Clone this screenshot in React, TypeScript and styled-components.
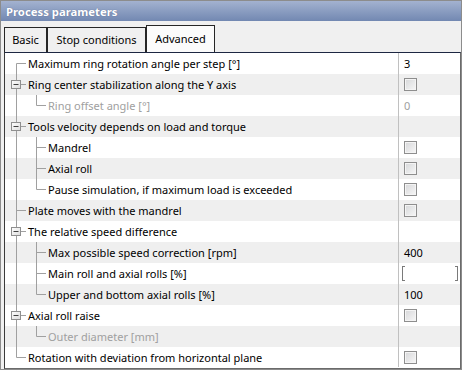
import styled, { createGlobalStyle } from "styled-components";

const GlobalStyle = createGlobalStyle`
  html, body {
    margin: 0;
    padding: 0;
    background: #f0f0f0;
  }
  body {
    font-family: "Noto Sans", "Liberation Sans", sans-serif;
    font-size: 11px;
  }
`;

const Window = styled.div`
  width: 462px;
  height: 370px;
  box-sizing: border-box;
  border: 1px solid #8c8c8c;
  background: #f0f0f0;
  display: flex;
  flex-direction: column;
`;

const TitleBar = styled.div`
  height: 20px;
  flex: none;
  display: flex;
  align-items: center;
  padding-left: 5px;
  background: linear-gradient(#a3b2d0, #7288b2);
  color: #fff;
  font-weight: bold;
  font-size: 11.3px;
  text-shadow: 0 0 1px rgba(40, 50, 90, 0.5);
`;

const TabStrip = styled.div`
  height: 31px;
  flex: none;
  display: flex;
  align-items: flex-end;
  padding-left: 3px;
`;

const Tab = styled.div<{ $active?: boolean; $w: number }>`
  box-sizing: border-box;
  width: ${({ $w }) => $w}px;
  height: ${({ $active }) => ($active ? "27px" : "25px")};
  padding-bottom: 1px;
  display: flex;
  align-items: center;
  justify-content: center;
  border: 1px solid #262626;
  border-bottom: none;
  background: ${({ $active }) => ($active ? "#fbfbfb" : "#f0f0f0")};
  color: #000;
  font-size: 11px;
  white-space: nowrap;
`;

const Panel = styled.div`
  flex: 1;
  margin-left: 3px;
  border: 1px solid #1d2742;
  border-left-color: #3a3a3a;
  border-right-color: #6b6b6b;
  border-bottom-color: #6b6b6b;
  background: #fff;
  display: flex;
  flex-direction: column;
`;

const Row = styled.div<{ $shade: boolean }>`
  height: 21px;
  flex: none;
  display: flex;
  background: ${({ $shade }) => ($shade ? "#efefef" : "#fff")};
`;

const NameCell = styled.div`
  width: 393px;
  flex: none;
  display: flex;
  align-items: center;
  padding-left: 1px;
  box-sizing: border-box;
  overflow: hidden;
`;

const Label = styled.span<{ $disabled?: boolean }>`
  margin-left: 2px;
  white-space: nowrap;
  color: ${({ $disabled }) => ($disabled ? "#a0a0a0" : "#000")};
`;

const ValueCell = styled.div<{ $last?: boolean }>`
  flex: 1;
  display: flex;
  align-items: center;
  padding: 0 2px 0 5px;
  border-left: 1px solid #c0c0c0;
  ${({ $last }) => ($last ? "border-image: linear-gradient(#c0c0c0 90%, transparent 90%) 1;" : "")}
`;

const ValueText = styled.span<{ $disabled?: boolean }>`
  color: ${({ $disabled }) => ($disabled ? "#a0a0a0" : "#000")};
`;

const Check = styled.span`
  width: 13px;
  height: 13px;
  box-sizing: border-box;
  border: 1px solid #8e8e8e;
  box-shadow: inset 0 0 0 1px #f4f4f4;
  background: linear-gradient(135deg, #d6d7d9, #f7f7f7);
`;

const Edit = styled.span`
  flex: 1;
  height: 15px;
  display: flex;
  justify-content: space-between;
  margin-left: -2px;
`;

const Bracket = styled.span<{ $side: "left" | "right" }>`
  width: 3px;
  box-sizing: border-box;
  border: 1px solid #7a7a7a;
  ${({ $side }) => ($side === "left" ? "border-right: none;" : "border-left: none;")}
`;

type Vert = "full" | "top" | "bottom";

const Guide = ({ vert, branch, expander }: { vert?: Vert; branch?: boolean; expander?: boolean }) => {
  const y0 = vert === "bottom" ? 10.5 : 0;
  const y1 = vert === "top" ? 10.5 : 21;
  return (
    <svg width="20" height="21" viewBox="0 0 20 21" style={{ flex: "none" }}>
      <defs>
        <linearGradient id="expfill" x1="0" y1="0" x2="1" y2="1">
          <stop offset="0" stopColor="#ffffff" />
          <stop offset="1" stopColor="#dcdcdc" />
        </linearGradient>
      </defs>
      {vert && <line x1="10.5" y1={y0} x2="10.5" y2={y1} stroke="#a0a0a0" />}
      {branch && <line x1="10.5" y1="10.5" x2="20" y2="10.5" stroke="#a0a0a0" />}
      {expander && (
        <>
          <rect x="5.5" y="6.5" width="9" height="8" fill="url(#expfill)" stroke="#8f8f8f" />
          <line x1="7.5" y1="10.5" x2="12.5" y2="10.5" stroke="#404040" />
        </>
      )}
    </svg>
  );
};

type Value =
  | { kind: "text"; text: string; disabled?: boolean }
  | { kind: "check" }
  | { kind: "edit" }
  | { kind: "none" };

interface Item {
  label: string;
  level: 0 | 1;
  value: Value;
  expander?: boolean;
  disabled?: boolean;
  lastChild?: boolean;
}

const items: Item[] = [
  { label: "Maximum ring rotation angle per step [°]", level: 0, value: { kind: "text", text: "3" } },
  { label: "Ring center stabilization along the Y axis", level: 0, expander: true, value: { kind: "check" } },
  { label: "Ring offset angle [°]", level: 1, disabled: true, lastChild: true, value: { kind: "text", text: "0", disabled: true } },
  { label: "Tools velocity depends on load and torque", level: 0, expander: true, value: { kind: "none" } },
  { label: "Mandrel", level: 1, value: { kind: "check" } },
  { label: "Axial roll", level: 1, value: { kind: "check" } },
  { label: "Pause simulation, if maximum load is exceeded", level: 1, lastChild: true, value: { kind: "check" } },
  { label: "Plate moves with the mandrel", level: 0, value: { kind: "check" } },
  { label: "The relative speed difference", level: 0, expander: true, value: { kind: "none" } },
  { label: "Max possible speed correction [rpm]", level: 1, value: { kind: "text", text: "400" } },
  { label: "Main roll and axial rolls [%]", level: 1, value: { kind: "edit" } },
  { label: "Upper and bottom axial rolls [%]", level: 1, lastChild: true, value: { kind: "text", text: "100" } },
  { label: "Axial roll raise", level: 0, expander: true, value: { kind: "check" } },
  { label: "Outer diameter [mm]", level: 1, disabled: true, lastChild: true, value: { kind: "none" } },
  { label: "Rotation with deviation from horizontal plane", level: 0, value: { kind: "check" } },
];

const renderValue = (v: Value) => {
  switch (v.kind) {
    case "text":
      return <ValueText $disabled={v.disabled}>{v.text}</ValueText>;
    case "check":
      return <Check />;
    case "edit":
      return (
        <Edit>
          <Bracket $side="left" />
          <Bracket $side="right" />
        </Edit>
      );
    default:
      return null;
  }
};

const App = () => {
  return (
    <>
      <GlobalStyle />
      <Window>
        <TitleBar>Process parameters</TitleBar>
        <TabStrip>
          <Tab $w={43}>Basic</Tab>
          <Tab $w={99}>Stop conditions</Tab>
          <Tab $w={69} $active>
            Advanced
          </Tab>
        </TabStrip>
        <Panel>
          {items.map((it, i) => {
            const first = i === 0;
            const last = i === items.length - 1;
            const rootVert: Vert = first ? "bottom" : last ? "top" : "full";
            return (
              <Row key={it.label} $shade={i % 2 === 1}>
                <NameCell>
                  {it.level === 0 ? (
                    <Guide vert={rootVert} branch expander={it.expander} />
                  ) : (
                    <>
                      <Guide vert="full" />
                      <Guide vert={it.lastChild ? "top" : "full"} branch />
                    </>
                  )}
                  <Label $disabled={it.disabled}>{it.label}</Label>
                </NameCell>
                <ValueCell $last={last}>{renderValue(it.value)}</ValueCell>
              </Row>
            );
          })}
        </Panel>
      </Window>
    </>
  );
};

export default App;
